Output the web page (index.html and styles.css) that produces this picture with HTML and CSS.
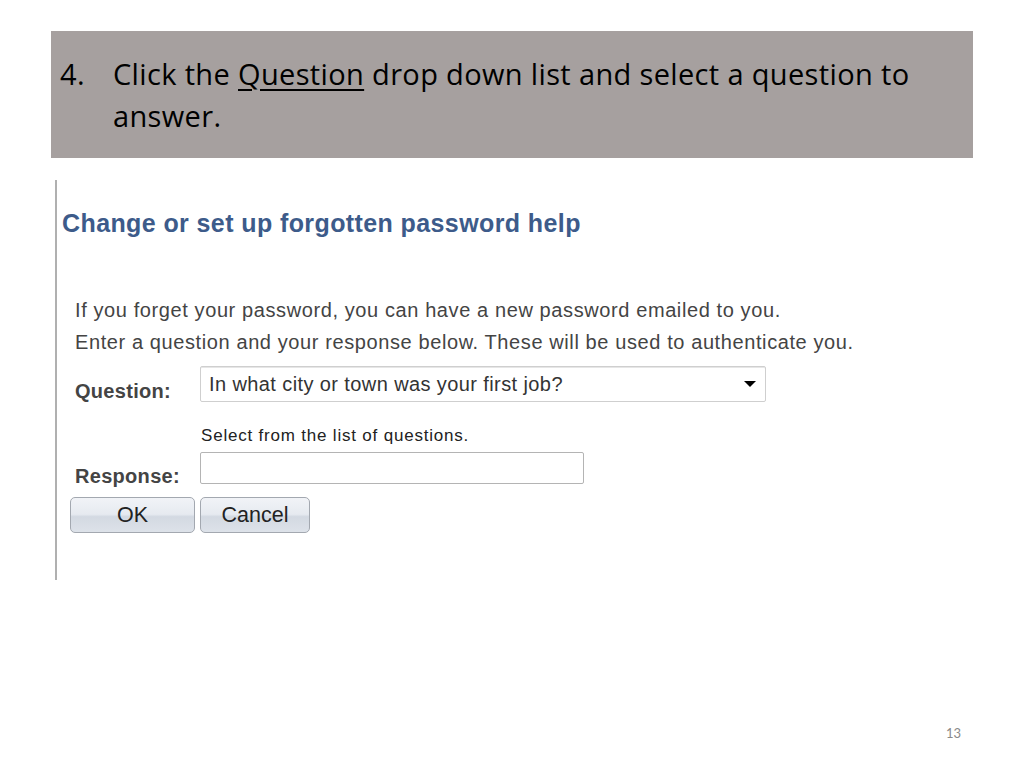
FILE: index.html
```html
<!DOCTYPE html>
<html>
<head>
<meta charset="utf-8">
<link rel="stylesheet" href="styles.css">
</head>
<body>
<div class="slide">
  <div class="banner">
    <div class="step">
      <span class="num">4.</span>
      <span class="txt">Click the <span class="ul">Question</span> drop down list and select a question to answer.</span>
    </div>
  </div>
  <div class="shot">
    <h1 class="title">Change or set up forgotten password help</h1>
    <p class="intro">If you forget your password, you can have a new password emailed to you.<br>Enter a question and your response below. These will be used to authenticate you.</p>
    <div class="row q-row">
      <span class="label">Question:</span>
      <div class="select">
        <span class="select-text">In what city or town was your first job?</span>
        <svg class="arrow" width="12" height="6" viewBox="0 0 12 6"><path d="M0 0h12L6 6z" fill="#000"/></svg>
      </div>
    </div>
    <div class="hint">Select from the list of questions.</div>
    <div class="row r-row">
      <span class="label">Response:</span>
      <div class="input"></div>
    </div>
    <div class="buttons">
      <div class="btn ok">OK</div>
      <div class="btn cancel">Cancel</div>
    </div>
  </div>
  <div class="page">13</div>
</div>
</body>
</html>
```
FILE: styles.css
```css
html, body { margin: 0; padding: 0; background: #fff; }
.slide { width: 1024px; height: 768px; position: relative; overflow: hidden; }
.banner {
  margin: 31px 0 0 51px;
  width: 922px; height: 127px;
  background: #a6a09f;
  box-sizing: border-box;
  padding: 22px 0 0 9px;
}
.step { display: flex; font-family: "Open Sans", "Lato", sans-serif; font-size: 29px; line-height: 42px; letter-spacing: 0.35px; color: #000; }
.num { width: 53px; flex: none; }
.txt { width: 840px; }
.ul { text-decoration: underline; text-decoration-thickness: 2px; text-underline-offset: 4px; }

.shot {
  margin: 22px 0 0 55px;
  border-left: 2px solid #b0b0b0;
  height: 400px;
  box-sizing: border-box;
  padding: 28px 0 0 5px;
  font-family: "Liberation Sans", Arial, sans-serif;
}
.title { margin: 0; font-size: 25px; line-height: 30px; letter-spacing: 0.4px; font-weight: bold; color: #3d5b8a; }
.intro { margin: 56px 0 0 13px; font-size: 20px; line-height: 32px; letter-spacing: 0.6px; color: #444; }
.row { display: flex; align-items: flex-start; margin-left: 13px; }
.label { width: 125px; font-weight: bold; font-size: 20px; line-height: 24px; letter-spacing: 0.3px; color: #444; flex: none; }
.q-row { margin-top: 8px; }
.q-row .label { padding-top: 13px; }
.select {
  width: 566px; height: 36px; box-sizing: border-box;
  border: 1px solid #cfcfcf; border-radius: 2px;
  box-shadow: inset 0 1px 0 #e6e6e6;
  display: flex; align-items: center; justify-content: space-between;
  padding: 0 9px 0 8px; background: #fff;
}
.select-text { font-size: 20px; letter-spacing: 0.4px; color: #333; }
.hint { margin: 23px 0 0 139px; font-size: 17px; line-height: 20px; letter-spacing: 0.8px; color: #222; }
.r-row { margin-top: 6px; }
.r-row .label { padding-top: 12px; }
.input { width: 384px; height: 32px; box-sizing: border-box; border: 1px solid #b4b4b4; border-radius: 2px; }
.buttons { display: flex; gap: 5px; margin: 9px 0 0 8px; }
.btn {
  height: 36px; box-sizing: border-box;
  border: 1px solid #a3a8b0; border-radius: 5px;
  background: linear-gradient(#f1f3f7 0%, #e6eaf0 48%, #d3d9e2 55%, #dde2e9 100%);
  font-size: 21.5px; color: #222; text-align: center; line-height: 34px;
}
.ok { width: 125px; }
.cancel { width: 110px; }
.page { position: absolute; left: 946px; top: 725px; font-family: "Lato", sans-serif; font-size: 13px; color: #8a8a8a; }
```
